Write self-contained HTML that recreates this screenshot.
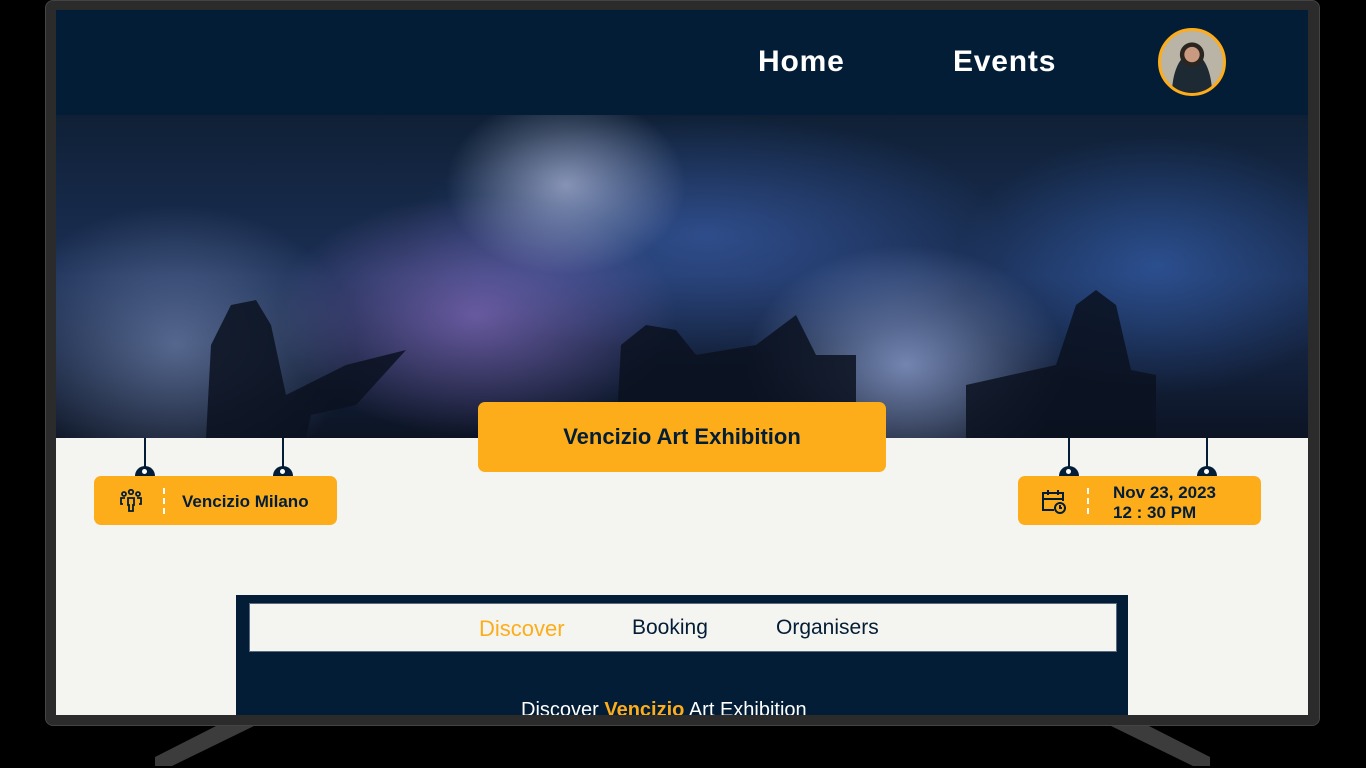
<!DOCTYPE html>
<html><head><style>
*{margin:0;padding:0;box-sizing:border-box}
body{width:1366px;height:768px;background:#000;position:relative;overflow:hidden;font-family:"Liberation Sans",sans-serif}
.abs{position:absolute}
.bezel{left:45px;top:0;width:1275px;height:726px;background:#2b2b2b;border-radius:8px;border:1px solid #444}
.screen{left:56px;top:10px;width:1252px;height:705px;background:#f4f5f0;overflow:hidden}
.nav{left:0;top:0;width:1252px;height:105px;background:#031d36}
.nav a{position:absolute;top:35px;color:#fff;font-size:30px;font-weight:bold;letter-spacing:0.8px}
.hero{left:0;top:105px;width:1252px;height:323px;overflow:hidden;
background:
radial-gradient(ellipse 120px 90px at 510px 70px,rgba(220,225,255,.55),transparent),
radial-gradient(ellipse 200px 120px at 420px 200px,rgba(170,130,230,.55),transparent),
radial-gradient(ellipse 160px 120px at 850px 250px,rgba(180,200,255,.6),transparent),
radial-gradient(ellipse 180px 140px at 120px 230px,rgba(150,170,220,.5),transparent),
radial-gradient(ellipse 200px 130px at 1100px 150px,rgba(60,110,200,.5),transparent),
radial-gradient(ellipse 300px 120px at 650px 120px,rgba(70,110,200,.5),transparent),
linear-gradient(180deg,#0f2036 0%,#1b2f55 50%,#0c1424 100%)}
.card{background:#fdad1a;border-radius:7px;color:#031d36;font-weight:bold}
.pin{width:2px;height:30px;background:#031d36}
.dome{width:20px;height:10px;background:#031d36;border-radius:10px 10px 0 0}
.dome:after{content:"";position:absolute;left:7px;top:3px;width:5px;height:5px;border-radius:50%;background:#fff}
.dash{width:0;height:26px;border-left:2px dashed #fff}
</style></head><body>
<svg class="abs" style="left:0;top:0" width="1366" height="768">
 <polygon points="155,757 220,724 258,724 172,766 155,766" fill="#3c3c3c"/>
 <polygon points="1210,757 1145,724 1107,724 1193,766 1210,766" fill="#3c3c3c"/>
</svg>
<div class="abs bezel"></div>
<div class="abs screen">
 <div class="abs nav">
  <a style="left:702px">Home</a>
  <a style="left:897px">Events</a>
  <div class="abs" style="left:1102px;top:18px;width:68px;height:68px;border-radius:50%;border:3px solid #fdad1a;background:radial-gradient(circle at 50% 38%,#c99a80 0 15%,#2b2520 16% 24%,transparent 25%),radial-gradient(ellipse at 50% 100%,#1e2a33 0 45%,transparent 46%),#b9b4a5"></div>
 </div>
 <div class="abs hero">
  <svg width="1252" height="323" style="position:absolute;left:0;top:0">
   <g fill="#0b1220" opacity=".85">
    <path d="M150 323 L155 230 L175 190 L200 185 L215 210 L230 280 L290 250 L350 235 L300 290 L255 300 L250 323Z"/>
    <path d="M560 323 L565 230 L590 210 L620 215 L640 240 L700 230 L740 200 L760 240 L800 240 L800 323Z"/>
    <path d="M910 323 L910 270 L1000 250 L1020 190 L1040 175 L1060 190 L1075 255 L1100 260 L1100 323Z"/>
   </g>
  </svg>
 </div>
 <div class="abs card" style="left:422px;top:392px;width:408px;height:70px;font-size:22px;text-align:center;line-height:70px">Vencizio Art Exhibition</div>
 <div class="abs pin" style="left:88px;top:428px"></div><div class="abs dome" style="left:79px;top:456px"></div>
 <div class="abs pin" style="left:226px;top:428px"></div><div class="abs dome" style="left:217px;top:456px"></div>
 <div class="abs card" style="left:38px;top:466px;width:243px;height:49px">
  <svg class="abs" style="left:24px;top:13px" width="26" height="24" viewBox="0 0 26 24" fill="none" stroke="#031d36" stroke-width="1.8"><circle cx="13" cy="3" r="2.2"/><circle cx="6" cy="5" r="2"/><circle cx="20" cy="5" r="2"/><path d="M10 9h6v7h-1v6h-4v-6h-1z"/><path d="M7 9H3v6h2M19 9h4v6h-2"/></svg>
  <div class="abs dash" style="left:69px;top:12px"></div>
  <div class="abs" style="left:88px;top:16px;font-size:17px">Vencizio Milano</div>
 </div>
 <div class="abs pin" style="left:1012px;top:428px"></div><div class="abs dome" style="left:1003px;top:456px"></div>
 <div class="abs pin" style="left:1150px;top:428px"></div><div class="abs dome" style="left:1141px;top:456px"></div>
 <div class="abs card" style="left:962px;top:466px;width:243px;height:49px">
  <svg class="abs" style="left:22px;top:12px" width="28" height="28" viewBox="0 0 28 28" fill="none" stroke="#031d36" stroke-width="2"><path d="M14 22H3V5h20v8M3 11h20M8 2v5M18 2v5"/><circle cx="20" cy="20" r="5"/><path d="M20 17v3h2"/></svg>
  <div class="abs dash" style="left:69px;top:12px"></div>
  <div class="abs" style="left:95px;top:7px;font-size:17px;line-height:20px">Nov 23, 2023<br>12 : 30 PM</div>
 </div>
 <div class="abs" style="left:180px;top:585px;width:892px;height:130px;background:#031d36">
  <div class="abs" style="left:13px;top:8px;width:868px;height:49px;background:#f4f5f0;border:1px solid #5a6b80"></div>
  <div class="abs" style="left:243px;top:21px;font-size:22px;color:#fdad1a">Discover</div>
  <div class="abs" style="left:396px;top:21px;font-size:21px;color:#031d36">Booking</div>
  <div class="abs" style="left:540px;top:21px;font-size:21px;color:#031d36">Organisers</div>
  <div class="abs" style="left:285px;top:104px;font-size:20px;color:#fff">Discover <b style="color:#fdad1a">Vencizio</b> Art Exhibition</div>
 </div>
</div>
</body></html>
